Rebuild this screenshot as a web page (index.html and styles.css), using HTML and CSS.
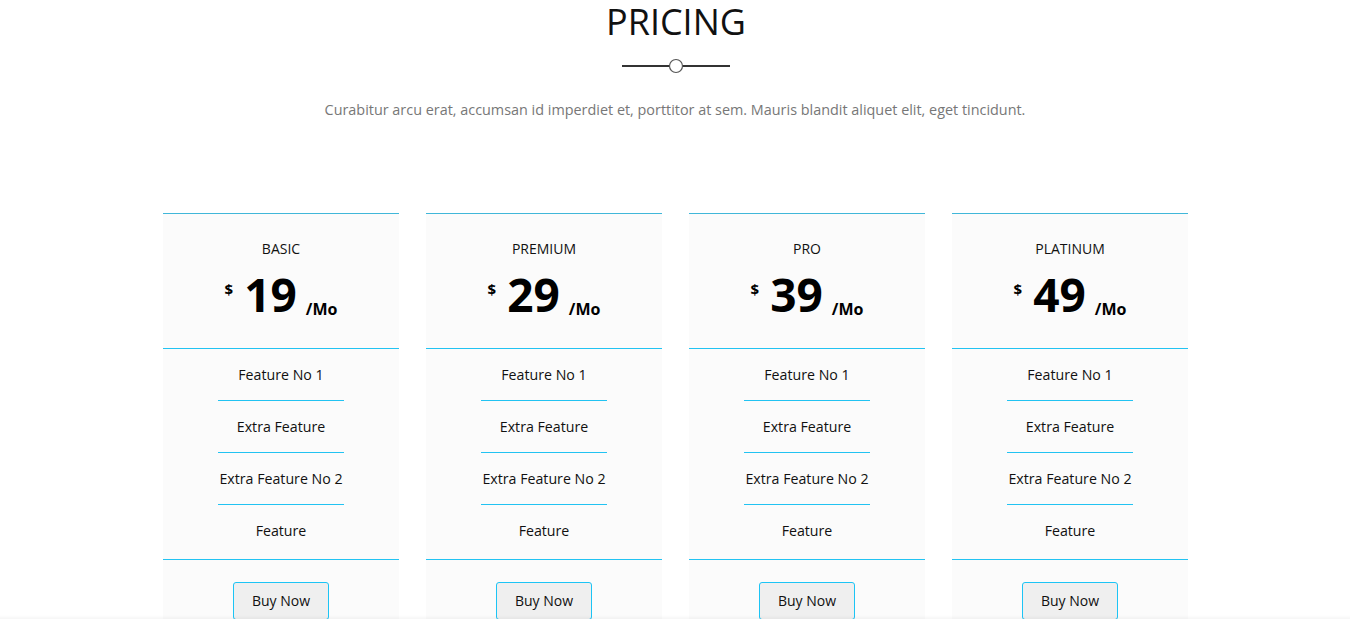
FILE: index.html
```html
<!DOCTYPE html>
<html lang="en">
<head>
<meta charset="utf-8">
<title>Pricing</title>
<link rel="stylesheet" href="styles.css">
</head>
<body>
<section class="pricing">
  <header class="section-head">
    <h1 class="title">PRICING</h1>
    <div class="divider">
      <svg width="108" height="16" viewBox="0 0 108 16" aria-hidden="true">
        <line x1="0" y1="8" x2="47" y2="8" stroke="#333" stroke-width="2"/>
        <line x1="61" y1="8" x2="108" y2="8" stroke="#333" stroke-width="2"/>
        <circle cx="54" cy="8" r="6.5" fill="#fff" stroke="#555" stroke-width="1.2"/>
      </svg>
    </div>
    <p class="subtitle">Curabitur arcu erat, accumsan id imperdiet et, porttitor at sem. Mauris blandit aliquet elit, eget tincidunt.</p>
  </header>

  <div class="plans">
    <div class="plan">
      <div class="plan-head">
        <h3 class="plan-name">BASIC</h3>
        <div class="price"><span class="cur">$</span><span class="amount">19</span><span class="per">/Mo</span></div>
      </div>
      <ul class="features">
        <li>Feature No 1</li>
        <li>Extra Feature</li>
        <li>Extra Feature No 2</li>
        <li>Feature</li>
      </ul>
      <div class="plan-foot"><button class="buy">Buy Now</button></div>
    </div>
    <div class="plan">
      <div class="plan-head">
        <h3 class="plan-name">PREMIUM</h3>
        <div class="price"><span class="cur">$</span><span class="amount">29</span><span class="per">/Mo</span></div>
      </div>
      <ul class="features">
        <li>Feature No 1</li>
        <li>Extra Feature</li>
        <li>Extra Feature No 2</li>
        <li>Feature</li>
      </ul>
      <div class="plan-foot"><button class="buy">Buy Now</button></div>
    </div>
    <div class="plan">
      <div class="plan-head">
        <h3 class="plan-name">PRO</h3>
        <div class="price"><span class="cur">$</span><span class="amount">39</span><span class="per">/Mo</span></div>
      </div>
      <ul class="features">
        <li>Feature No 1</li>
        <li>Extra Feature</li>
        <li>Extra Feature No 2</li>
        <li>Feature</li>
      </ul>
      <div class="plan-foot"><button class="buy">Buy Now</button></div>
    </div>
    <div class="plan">
      <div class="plan-head">
        <h3 class="plan-name">PLATINUM</h3>
        <div class="price"><span class="cur">$</span><span class="amount">49</span><span class="per">/Mo</span></div>
      </div>
      <ul class="features">
        <li>Feature No 1</li>
        <li>Extra Feature</li>
        <li>Extra Feature No 2</li>
        <li>Feature</li>
      </ul>
      <div class="plan-foot"><button class="buy">Buy Now</button></div>
    </div>
  </div>
</section>
<div class="bottom-shade"></div>
</body>
</html>
```

FILE: styles.css
```css
html, body {
  margin: 0;
  padding: 0;
  background: #fff;
}
body {
  font-family: "Open Sans", "Liberation Sans", sans-serif;
  color: #222;
}
.pricing {
  display: flex;
  flex-direction: column;
  align-items: center;
}
.section-head {
  display: flex;
  flex-direction: column;
  align-items: center;
}
.title {
  margin: 0;
  padding: 1px 0 0 2px;
  font-size: 36px;
  line-height: 42px;
  font-weight: 400;
  color: #111;
}
.divider {
  margin-top: 15px;
  height: 16px;
  padding-left: 3px;
}
.divider svg {
  display: block;
}
.subtitle {
  margin: 26px 0 0;
  font-size: 14.4px;
  line-height: 20px;
  color: #777;
}
.plans {
  margin-top: 93px;
  display: grid;
  grid-template-columns: repeat(4, 236px);
  column-gap: 27px;
  padding-left: 1px;
}
.plan {
  background: #fbfbfb;
  border-top: 1px solid #41b7d9;
  text-align: center;
}
.plan-head {
  padding: 25px 0 22px;
  border-bottom: 1px solid #22c3f2;
}
.plan-name {
  margin: 0;
  font-size: 14px;
  line-height: 20px;
  font-weight: 400;
  color: #111;
}
.price {
  margin-top: 12px;
  height: 55px;
  line-height: 55px;
  color: #000;
  font-weight: 700;
}
.cur {
  font-size: 15px;
  line-height: 1;
  vertical-align: 17px;
  margin-right: 11px;
}
.amount {
  font-size: 46px;
  line-height: 1;
}
.per {
  font-size: 16px;
  line-height: 1;
  margin-left: 9px;
  vertical-align: -3px;
}
.features {
  list-style: none;
  margin: 0;
  padding: 0 0 2px;
  border-bottom: 1px solid #22c3f2;
}
.features li {
  width: 126px;
  margin: 0 auto;
  padding: 16px 0 15px;
  font-size: 14.2px;
  line-height: 20px;
  color: #111;
  border-bottom: 1px solid #22c3f2;
  white-space: nowrap;
}
.features li:last-child {
  border-bottom: none;
  padding-bottom: 16px;
}
.plan-foot {
  padding: 22px 0 20px;
}
.buy {
  font-family: "Open Sans", "Liberation Sans", sans-serif;
  font-size: 14px;
  line-height: 20px;
  padding: 8px 18px;
  color: #111;
  background: #efefef;
  border: 1px solid #1cc4f5;
  border-radius: 3px;
}
.bottom-shade {
  position: fixed;
  left: 0;
  right: 0;
  bottom: 0;
  height: 4px;
  background: linear-gradient(rgba(0,0,0,0), rgba(0,0,0,0.035));
  pointer-events: none;
}
```
